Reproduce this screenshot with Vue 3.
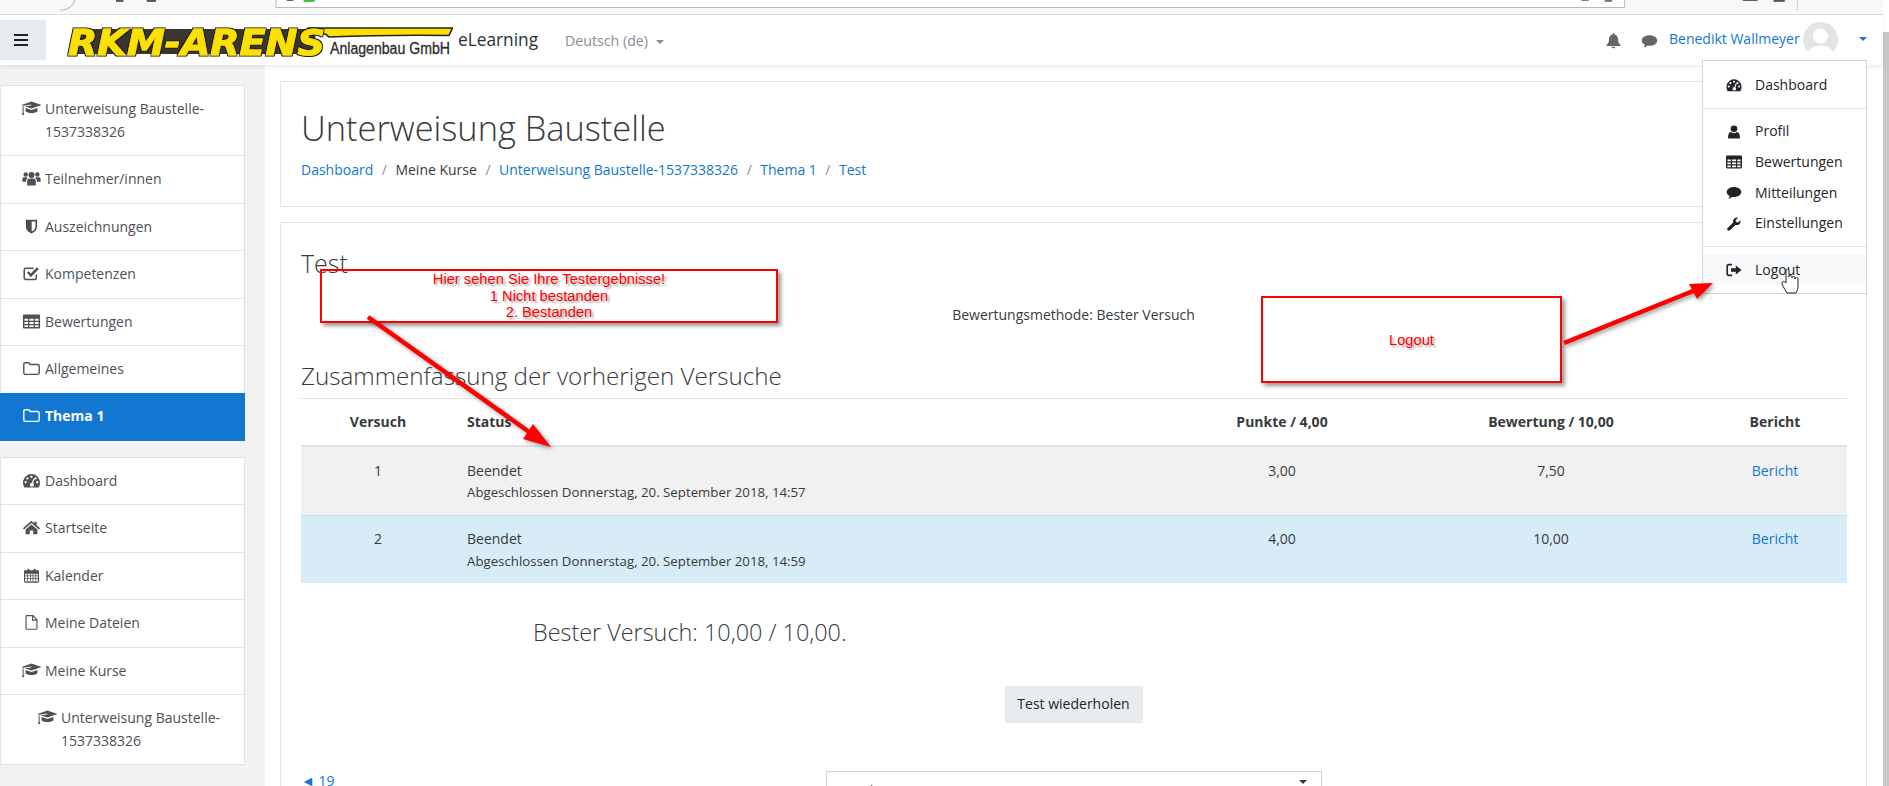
<script setup>
const courseLabel = 'Unterweisung Baustelle-1537338326'
const nav1 = [
  { icon: 'cap', label: courseLabel },
  { icon: 'users', label: 'Teilnehmer/innen' },
  { icon: 'shield', label: 'Auszeichnungen' },
  { icon: 'check', label: 'Kompetenzen' },
  { icon: 'table', label: 'Bewertungen' },
  { icon: 'folder', label: 'Allgemeines' },
  { icon: 'folder', label: 'Thema 1', active: true },
]
const nav2 = [
  { icon: 'gauge', label: 'Dashboard' },
  { icon: 'home', label: 'Startseite' },
  { icon: 'calendar', label: 'Kalender' },
  { icon: 'file', label: 'Meine Dateien' },
  { icon: 'cap', label: 'Meine Kurse' },
  { icon: 'cap', label: courseLabel, sub: true },
]
const crumbs = [
  { t: 'Dashboard', link: true },
  { t: 'Meine Kurse' },
  { t: courseLabel, link: true },
  { t: 'Thema 1', link: true },
  { t: 'Test', link: true },
]
const attempts = [
  { n: 1, date: 'Abgeschlossen Donnerstag, 20. September 2018, 14:57', p: '3,00', g: '7,50', best: false },
  { n: 2, date: 'Abgeschlossen Donnerstag, 20. September 2018, 14:59', p: '4,00', g: '10,00', best: true },
]
const menu = [
  [{ icon: 'gauge', label: 'Dashboard' }],
  [
    { icon: 'user', label: 'Profil' },
    { icon: 'table', label: 'Bewertungen' },
    { icon: 'comment', label: 'Mitteilungen' },
    { icon: 'wrench', label: 'Einstellungen' },
  ],
  [{ icon: 'signout', label: 'Logout', hover: true }],
]
</script>

<template>
  <div class="root">
    <svg class="sprite" aria-hidden="true">
      <symbol id="cap" viewBox="0 0 21 15"><path d="M10.5 0.5 20.5 4 10.5 7.6 3.6 5.2 10.3 4.4 10.2 3.6 2.2 4.7 0.5 4Z"/><path d="M4.6 7 10.5 9.1 16.4 7V10.2C15 12.6 6 12.6 4.6 10.2Z"/><path d="M1.6 5.2H2.6V11.4L3.2 14H1L1.6 11.4Z"/></symbol>
      <symbol id="users" viewBox="0 0 20 16"><circle cx="10" cy="4.2" r="3.2"/><circle cx="3.8" cy="3.6" r="2.4"/><circle cx="16.2" cy="3.6" r="2.4"/><path d="M5.4 15.5V11C5.4 9 6.6 8 8 8H12C13.4 8 14.6 9 14.6 11V15.5Z"/><path d="M0.3 11.5V8.5C0.3 7 1.3 6.6 2.4 6.6H5.2C5.4 7 5.6 7.3 6 7.6 4.8 8.3 4.2 9.5 4.2 11V11.5Z"/><path d="M19.7 11.5V8.5C19.7 7 18.7 6.6 17.6 6.6H14.8C14.6 7 14.4 7.3 14 7.6 15.2 8.3 15.8 9.5 15.8 11V11.5Z"/></symbol>
      <symbol id="shield" viewBox="0 0 14 16"><path fill-rule="evenodd" d="M1 0.8H13V8C13 12 10 14 7 15.5 4 14 1 12 1 8ZM7.2 2.6V13.4C9.2 12.3 11.2 10.8 11.2 8V2.6Z"/></symbol>
      <symbol id="check" viewBox="0 0 16 14"><path d="M12.5 8V11C12.5 12 11.8 12.7 11 12.7H3C2 12.7 1.2 12 1.2 11V3.6C1.2 2.6 2 2 3 2H10" fill="none" stroke="currentColor" stroke-width="1.4"/><path d="M3.8 6.4 5.4 4.9 7.4 7 13 1.2 14.8 2.8 7.4 10.4Z"/></symbol>
      <symbol id="table" viewBox="0 0 16 14"><path fill-rule="evenodd" d="M1.2 0.5H14.8C15.4 0.5 16 1 16 1.7V12.3C16 13 15.4 13.5 14.8 13.5H1.2C0.6 13.5 0 13 0 12.3V1.7C0 1 0.6 0.5 1.2 0.5ZM1.4 4.4V6.3H4.8V4.4ZM6 4.4V6.3H10V4.4ZM11.2 4.4V6.3H14.6V4.4ZM1.4 7.4V9.3H4.8V7.4ZM6 7.4V9.3H10V7.4ZM11.2 7.4V9.3H14.6V7.4ZM1.4 10.4V12.2H4.8V10.4ZM6 10.4V12.2H10V10.4ZM11.2 10.4V12.2H14.6V10.4Z"/></symbol>
      <symbol id="folder" viewBox="0 0 16 14"><path d="M0.8 3C0.8 2.2 1.3 1.6 2.2 1.6H5.2C6 1.6 6.3 2 6.6 3.2H13.6C14.5 3.2 15.2 3.8 15.2 4.6V11C15.2 11.9 14.5 12.5 13.6 12.5H2.2C1.3 12.5 0.8 11.9 0.8 11Z" fill="none" stroke="currentColor" stroke-width="1.3"/></symbol>
      <symbol id="gauge" viewBox="0 0 18 15"><path fill-rule="evenodd" d="M9 1A8.8 8.8 0 0 0 1.8 14.4H16.2A8.8 8.8 0 0 0 9 1ZM9 2.6A1.2 1.2 0 1 1 8.9 5 1.2 1.2 0 0 1 9 2.6ZM5 4.2A1.2 1.2 0 1 1 4.9 6.6 1.2 1.2 0 0 1 5 4.2ZM13 4.2A1.2 1.2 0 1 1 12.9 6.6 1.2 1.2 0 0 1 13 4.2ZM3.2 8A1.2 1.2 0 1 1 3.1 10.4 1.2 1.2 0 0 1 3.2 8ZM14.8 8A1.2 1.2 0 1 1 14.7 10.4 1.2 1.2 0 0 1 14.8 8ZM11 5.6 12.1 6 10.5 10A2 2 0 1 1 9.3 9.7Z"/></symbol>
      <symbol id="home" viewBox="0 0 16 14"><path d="M8 0.8 10.8 3.2V1.6H12.8V5L16 7.8 15 8.8 8 2.9 1 8.8 0 7.8Z"/><path d="M8 4.2 13.5 8.8V13.4H9.6V9.8H6.4V13.4H2.5V8.8Z"/></symbol>
      <symbol id="calendar" viewBox="0 0 16 16"><path fill-rule="evenodd" d="M1.2 2.4H3.6V1.5C3.6 0.4 5.8 0.4 5.8 1.5V2.4H10.2V1.5C10.2 0.4 12.4 0.4 12.4 1.5V2.4H14.8C15.4 2.4 16 3 16 3.6V14.5C16 15.2 15.4 15.7 14.8 15.7H1.2C0.6 15.7 0 15.2 0 14.5V3.6C0 3 0.6 2.4 1.2 2.4ZM1.2 6V8H3.2V6ZM4 6V8H6.4V6ZM7.2 6V8H9.2V6ZM10 6V8H12.2V6ZM13 6V8H14.8V6ZM1.2 8.8V11H3.2V8.8ZM4 8.8V11H6.4V8.8ZM7.2 8.8V11H9.2V8.8ZM10 8.8V11H12.2V8.8ZM13 8.8V11H14.8V8.8ZM1.2 11.8V14.5H3.2V11.8ZM4 11.8V14.5H6.4V11.8ZM7.2 11.8V14.5H9.2V11.8ZM10 11.8V14.5H12.2V11.8ZM13 11.8V14.5H14.8V11.8Z"/></symbol>
      <symbol id="file" viewBox="0 0 14 16"><path d="M1.2 1.2C1.2 0.9 1.4 0.7 1.7 0.7H8.5L12.8 5V14.6C12.8 14.9 12.6 15.2 12.3 15.2H1.7C1.4 15.2 1.2 14.9 1.2 14.6Z M8.2 1V5.4H12.6" fill="none" stroke="currentColor" stroke-width="1.2"/></symbol>
      <symbol id="user" viewBox="0 0 14 16"><circle cx="7" cy="4.4" r="3.8"/><path d="M1 15.5C0.4 15.5 0.2 15 0.2 14.3 0.2 11 1.2 8.4 3.6 8 4.5 8.8 5.6 9.3 7 9.3 8.4 9.3 9.5 8.8 10.4 8 12.8 8.4 13.8 11 13.8 14.3 13.8 15 13.6 15.5 13 15.5Z"/></symbol>
      <symbol id="comment" viewBox="0 0 18 15"><path d="M9 0.8C13.6 0.8 17.2 3.2 17.2 6.4 17.2 9.6 13.6 12 9 12 8.2 12 7.6 12 7 11.8 5.8 13 4.4 13.8 2.6 14 3.4 13 4 12 4.2 10.9 2 10 0.8 8.4 0.8 6.4 0.8 3.2 4.4 0.8 9 0.8Z"/></symbol>
      <symbol id="wrench" viewBox="0 0 16 16"><path d="M15.4 3.6C15.9 5.6 15.2 7.8 13.2 8.8 12 9.4 10.8 9.4 9.8 9L3.4 15.2C2.6 16 1.3 15.9 0.7 15.2 0 14.4 0 13.3 0.8 12.6L7 6.2C6.6 4.8 7 3 8.2 1.9 9.6 0.6 11.2 0.4 12.6 0.8L9.8 3.6 10.4 5.6 12.6 6.2Z"/></symbol>
      <symbol id="signout" viewBox="0 0 16 14"><path d="M6 1.6H3C2 1.6 1.2 2.4 1.2 3.4V10.6C1.2 11.6 2 12.4 3 12.4H6" fill="none" stroke="currentColor" stroke-width="1.6"/><path d="M9.8 2.6 15.6 7 9.8 11.4V8.8H5V5.2H9.8Z"/></symbol>
      <symbol id="bell" viewBox="0 0 16 17"><path d="M8 0.4C8.6 0.4 9 0.8 9 1.4V2.2C11.4 2.7 12.8 4.6 12.8 7 12.8 10.6 13.8 12 15.5 13.6V14.4H0.5V13.6C2.2 12 3.2 10.6 3.2 7 3.2 4.6 4.6 2.7 7 2.2V1.4C7 0.8 7.4 0.4 8 0.4Z"/><path d="M6 15.2H10C10 16.2 9.1 16.8 8 16.8 6.9 16.8 6 16.2 6 15.2Z"/></symbol>
    </svg>

    <div class="window">
      <svg class="chrome" width="1889" height="15" viewBox="0 0 1889 15" aria-hidden="true">
        <path d="M0 11C8 11 15 6 16 0" fill="none" stroke="#aaa"/>
        <rect x="60" y="0" width="8" height="2" fill="#555"/>
        <rect x="93" y="0" width="10" height="2" fill="#555"/>
        <rect x="231.5" y="-2" width="1445" height="10" fill="#fff" stroke="#b5b5b5"/>
        <rect x="261" y="0" width="12" height="2" fill="#3cc13c"/>
        <rect x="243" y="0" width="7" height="1" fill="#555"/>
        <rect x="1630" y="0" width="8" height="1" fill="#777"/>
        <rect x="1655" y="0" width="8" height="2" fill="#777"/>
        <rect x="1803" y="0" width="16" height="1" fill="#555"/>
        <rect x="1836" y="0" width="12" height="2" fill="#555"/>
        <rect x="1861" y="0" width="1" height="11" fill="#ccc"/>
      </svg>

      <header class="navbar">
        <button class="burger" aria-label="Menü"><span></span><span></span><span></span></button>
        <svg class="logo" width="386" height="36" viewBox="0 0 386 36">
          <defs>
            <filter id="outline" x="-3%" y="-10%" width="106%" height="120%">
              <feMorphology in="SourceAlpha" operator="dilate" radius="1.1" result="fat"/>
              <feFlood flood-color="#1f1f1f"/>
              <feComposite in2="fat" operator="in" result="edge"/>
              <feMerge><feMergeNode in="edge"/><feMergeNode in="SourceGraphic"/></feMerge>
            </filter>
          </defs>
          <path d="M9 7H250L245 32H3Z" fill="#3a352e"/>
          <path d="M241 6H385.500L382 13.500C340 13 300 13.500 262 15 258 11 252 8.500 241 8Z" fill="#fbe000" stroke="#222" stroke-width="1.6" stroke-linejoin="round"/>
          <text class="logo-main" filter="url(#outline)" x="1" y="32.500" textLength="257" lengthAdjust="spacingAndGlyphs">RKM-ARENS</text>
          <text class="logo-sub" x="263" y="32" textLength="120" lengthAdjust="spacingAndGlyphs">Anlagenbau GmbH</text>
        </svg>
        <span class="brand">eLearning</span>
        <span class="lang">Deutsch (de)<i class="caret"></i></span>
        <span class="nav-fill"></span>
        <svg class="nav-ico bell"><use href="#bell"/></svg>
        <svg class="nav-ico chat"><use href="#comment"/></svg>
        <span class="uname">Benedikt Wallmeyer</span>
        <svg class="avatar" width="35" height="35" viewBox="0 0 35 35">
          <defs><clipPath id="avc"><circle cx="17.5" cy="17.5" r="17.5"/></clipPath></defs>
          <circle cx="17.5" cy="17.5" r="17.5" fill="#e4e4e4"/>
          <g clip-path="url(#avc)" fill="#fff">
            <circle cx="17.5" cy="14" r="7.5"/>
            <path d="M3 36C4 27 10 23.500 17.500 23.500S31 27 32 36Z"/>
          </g>
        </svg>
        <i class="caret blue"></i>

        <div class="dropdown">
          <template v-for="(group, gi) in menu" :key="gi">
            <div v-if="gi" class="divider"></div>
            <div v-for="m in group" :key="m.label" class="dd-item" :class="{ hover: m.hover }">
              <svg class="dd-ico"><use :href="'#' + m.icon"/></svg>
              <span>{{ m.label }}</span>
            </div>
          </template>
        </div>
      </header>

      <div class="layout">
        <aside class="aside">
          <ul class="side-list">
            <li v-for="n in nav1" :key="n.label + n.icon" :class="{ active: n.active }">
              <svg class="side-ico" :class="n.icon"><use :href="'#' + n.icon"/></svg>
              <span class="side-text">{{ n.label }}</span>
            </li>
          </ul>
          <ul class="side-list second">
            <li v-for="n in nav2" :key="n.label + n.icon" :class="{ sub: n.sub }">
              <svg class="side-ico" :class="n.icon"><use :href="'#' + n.icon"/></svg>
              <span class="side-text">{{ n.label }}</span>
            </li>
          </ul>
        </aside>

        <main class="main">
          <section class="card head-card">
            <h1>Unterweisung Baustelle</h1>
            <nav class="crumbs">
              <template v-for="(c, i) in crumbs" :key="c.t">
                <span v-if="i" class="sep">/</span>
                <a :class="{ plain: !c.link }">{{ c.t }}</a>
              </template>
            </nav>
          </section>

          <section class="card body-card">
            <h2>Test</h2>
            <p class="method">Bewertungsmethode: Bester Versuch</p>
            <h3>Zusammenfassung der vorherigen Versuche</h3>
            <table class="attempts">
              <colgroup>
                <col style="width:154px"><col style="width:710px"><col style="width:234px"><col style="width:304px"><col style="width:144px">
              </colgroup>
              <thead>
                <tr>
                  <th>Versuch</th><th class="left">Status</th><th>Punkte / 4,00</th><th>Bewertung / 10,00</th><th>Bericht</th>
                </tr>
              </thead>
              <tbody>
                <tr v-for="a in attempts" :key="a.n" :class="a.best ? 'best' : 'odd'">
                  <td>{{ a.n }}</td>
                  <td class="left">Beendet<div class="sub-date">{{ a.date }}</div></td>
                  <td>{{ a.p }}</td>
                  <td>{{ a.g }}</td>
                  <td><a>Bericht</a></td>
                </tr>
              </tbody>
            </table>
            <p class="best-line">Bester Versuch: 10,00 / 10,00.</p>
            <div class="btn-row"><button class="btn">Test wiederholen</button></div>
            <div class="foot-row">
              <a class="prev">◄ 19</a>
              <div class="jump"><span>Direkt zu:</span><i class="caret dark"></i></div>
            </div>
          </section>
        </main>
      </div>
    </div>

    <div class="scrollbar"></div>

    <!-- Annotations drawn on top of the screenshot -->
    <svg class="arrows" width="1889" height="786" viewBox="0 0 1889 786" aria-hidden="true">
      <g class="arrow">
        <path d="M368 317 532 434" stroke="#f00" stroke-width="4.5" fill="none"/>
        <path d="M551 447 523 439 533 424Z" fill="#f00"/>
        <path d="M1564 343 1698 289" stroke="#f00" stroke-width="4.5" fill="none"/>
        <path d="M1713 283 1689 284 1697 299Z" fill="#f00"/>
      </g>
      <path d="M1787 293C1784 288 1782 285 1782 283 1782 281 1784 281 1786 283V271C1786 269 1789 269 1789 271V277C1789 275 1792 275 1792 277V278C1792 276 1795 276 1795 278V279C1795 277 1798 277 1798 279V286C1798 289 1797 291 1796 293Z" fill="#fff" stroke="#222" stroke-width="1"/>
    </svg>
    <div class="note note-a">Hier sehen Sie Ihre Testergebnisse!<br>1 Nicht bestanden<br>2. Bestanden</div>
    <div class="note note-b">Logout</div>
  </div>
</template>

<style>
html, body { margin: 0; height: 100%; overflow: hidden; background: #fff; }
</style>

<style scoped>
.root {
  position: relative;
  display: flex;
  width: 1889px;
  height: 786px;
  overflow: hidden;
  font-family: "Open Sans", "Noto Sans", sans-serif;
  font-size: 14px;
  line-height: 22.5px;
  color: #373a3c;
  background: #fff;
}
.sprite { display: none; }
.window { width: 1883px; display: flex; flex-direction: column; }
.scrollbar { width: 6px; margin-top: 32px; background: #c8c8c8; }
.chrome { display: block; flex: none; background: #f8f8f8; border-bottom: 1px solid #ddd; width: 1883px; height: 14px; }

.navbar {
  position: relative;
  z-index: 3;
  flex: none;
  height: 50px;
  display: flex;
  align-items: center;
  background: #fff;
  box-shadow: 0 2px 4px rgba(0, 0, 0, .08);
}
.burger {
  width: 46px;
  height: 40px;
  border: 0;
  padding: 0 0 0 14px;
  background: #e9ecef;
  display: flex;
  flex-direction: column;
  justify-content: center;
  gap: 2.5px;
}
.burger span { display: block; width: 14px; height: 2.5px; background: #222; }
.logo { margin-left: 21px; flex: none; }
.logo-main {
  font-family: "DejaVu Sans", sans-serif;
  font-weight: 700;
  font-style: italic;
  font-size: 36px;
  fill: #fbe000;
  stroke: #fbe000;
  stroke-width: .9px;
}
.logo-sub {
  font-family: "Liberation Sans", sans-serif;
  font-size: 16px;
  fill: #2b2b2b;
  stroke: #2b2b2b;
  stroke-width: .3px;
}
.brand { margin-left: 5px; font-size: 17.3px; color: #2b2f33; width: 107px; white-space: nowrap; }
.lang { color: #868e96; font-size: 14.2px; display: flex; align-items: center; margin-top: 3px; }
.caret {
  display: inline-block;
  width: 0;
  height: 0;
  margin-left: 8px;
  border-left: 4px solid transparent;
  border-right: 4px solid transparent;
  border-top: 4.5px solid #868e96;
}
.caret.blue { border-top-color: #1177d1; margin-left: 21px; margin-right: 16px; margin-top: -3px; }
.caret.dark { border-top-color: #373a3c; margin: 0; }
.nav-fill { flex: 1; }
.nav-ico { color: #666; fill: currentColor; }
.bell { width: 15px; height: 17px; }
.chat { width: 17px; height: 15px; margin-left: 20px; margin-top: 2px; }
.uname { color: #1177d1; font-size: 14px; margin-left: 11px; width: 134px; white-space: nowrap; margin-top: -2px; }
.avatar { flex: none; margin-top: -2px; }

.dropdown {
  position: absolute;
  top: 45px;
  left: 1702px;
  width: 163px;
  padding: 9px 0 8px;
  background: #fff;
  border: 1px solid #d5d5d5;
  color: #212529;
}
.dd-item { height: 30.7px; display: flex; align-items: center; padding-left: 23px; gap: 13px; }
.dd-item.hover { background: #f8f9fa; }
.dd-ico { width: 16px; height: 14px; fill: #212529; color: #212529; flex: none; }
.divider { height: 1px; margin: 7px 0 7.5px; background: #e4e4e4; }

.layout { flex: 1; display: flex; min-height: 0; }
.aside { width: 265px; flex: none; background: #f2f2f2; padding: 20px 20px 0 0; box-sizing: border-box; }
.side-list { list-style: none; margin: 0; padding: 0; background: #fff; border: 1px solid #e3e3e3; border-right-width: 1px; }
.side-list.second { margin-top: 16px; }
.side-list li {
  display: flex;
  padding: 12px 8px 12px 20px;
  border-top: 1px solid #e3e3e3;
  color: #4b5158;
  min-height: 22.500px;
}
.side-list li:first-child { border-top: 0; }
.side-list li.sub { padding-left: 36px; }
.side-list li.active {
  background: #1177d1;
  color: #fff;
  font-weight: 700;
  margin: 0 -1px -1px;
  padding-left: 21px;
  border-top: 0;
  padding-top: 12.5px;
  padding-bottom: 13px;
}
.side-ico { width: 21px; height: 15px; margin-top: 3px; margin-right: 3px; flex: none; fill: currentColor; }
.side-text { flex: 1; }

.main { flex: 1; min-width: 0; padding: 16px 16px 0 15px; box-sizing: border-box; }
.card { border: 1px solid #e3e3e3; padding: 0 20px; background: #fff; }
.head-card { height: 126px; box-sizing: border-box; padding-top: 24px; }
h1 { margin: 0 0 10px; font-size: 34.4px; line-height: 43px; font-weight: 300; color: #373a3c; white-space: nowrap; }
.crumbs { display: flex; align-items: center; height: 22.5px; white-space: nowrap; }
.crumbs a, td a { color: #1177d1; }
.crumbs a.plain { color: #373a3c; }
.sep { color: #868e96; margin: 0 8.5px; }

.body-card { margin-top: 15px; height: 700px; padding-top: 26px; }
h2 { margin: 0; font-size: 25px; line-height: 29px; font-weight: 300; }
.method { margin: 26px 0 0; text-align: center; height: 22.5px; }
h3 { margin: 34px 0 8px; font-size: 24.2px; line-height: 29px; font-weight: 300; white-space: nowrap; }
.attempts { width: 1546px; table-layout: fixed; border-collapse: collapse; border-top: 1px solid #dee2e6; }
th { padding: 12px; font-weight: 700; text-align: center; border-bottom: 2px solid #dee2e6; }
td { padding: 12.5px 12px 11.5px; text-align: center; vertical-align: top; }
.left { text-align: left; }
.sub-date { font-size: 13.25px; line-height: 21px; }
tr.odd td { background: #f1f1f1; }
tr.best td { background: #d7ecf6; border-top: 1px solid #c6e0ec; }
.best-line { margin: 31px 0 0 232px; font-size: 23.4px; line-height: 36px; font-weight: 300; }
.btn-row { display: flex; justify-content: center; margin-top: 36px; }
.btn {
  width: 138px;
  height: 37px;
  padding: 0;
  border: 0;
  background: #e9ecef;
  color: #212529;
  font: inherit;
  font-size: 14px;
}
.foot-row { display: grid; grid-template-columns: 1fr 496px 1fr; margin-top: 48px; }
.prev { color: #1177d1; margin-top: -1px; }
.jump {
  height: 38px;
  box-sizing: border-box;
  border: 1px solid #ced4da;
  padding: 8px 14px 0 16px;
  display: flex;
  justify-content: space-between;
  align-items: flex-start;
}

.arrows { position: absolute; inset: 0; z-index: 5; pointer-events: none; }
.arrow { filter: drop-shadow(2px 2px 2px rgba(0, 0, 0, .4)); }
.note {
  position: absolute;
  z-index: 4;
  box-sizing: border-box;
  border: 2px solid #f00;
  box-shadow: 3px 3px 4px rgba(0, 0, 0, .4);
  color: #f00;
  font-family: "Liberation Sans", Arial, sans-serif;
  font-size: 14.7px;
  line-height: 16.5px;
  text-align: center;
  text-shadow: 2px 2px 2px rgba(0, 0, 0, .35);
}
.note-a { left: 320px; top: 269px; width: 458px; height: 54px; }
.note-b { left: 1261px; top: 296px; width: 301px; height: 87px; padding-top: 34px; background: #fff; }
</style>
